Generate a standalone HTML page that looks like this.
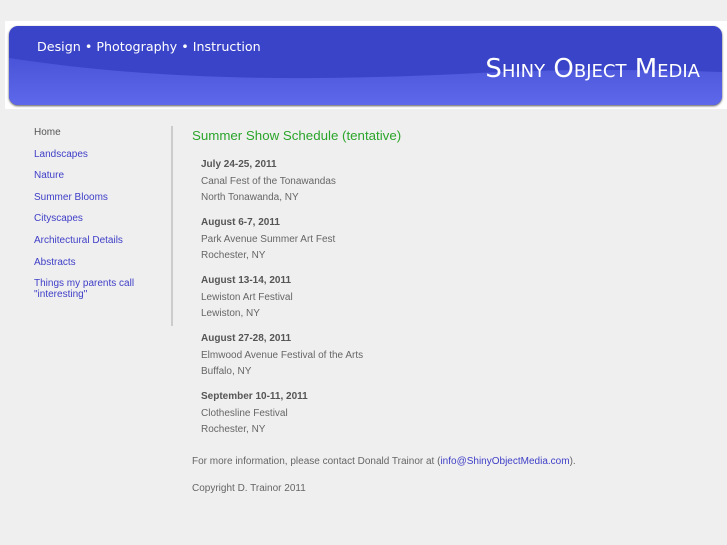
<!DOCTYPE html>
<html><head><style>
body{margin:0;background:#efefef;font-family:"Liberation Sans",sans-serif;width:727px;height:545px;overflow:hidden;position:relative}
.hdr{position:absolute;left:5px;top:21px;width:722px;height:88px;background:#fff}
.ban{position:absolute;left:9px;top:26px;width:713px;height:79px;border-radius:9px;overflow:hidden;background:#3a44c8;box-shadow:0 1px 2px #555}
.t1{position:absolute;left:28px;top:13px;color:#fff;font-size:12.7px;font-family:"DejaVu Sans",sans-serif}
.t2{position:absolute;right:22px;top:28px;color:#fff;font-size:26px;font-family:"DejaVu Sans",sans-serif;font-variant:small-caps}
.nav{position:absolute;left:34px;top:127px;font-size:10px}
.nav a{display:block;color:#3e3ec8;text-decoration:none;height:21.6px}
.vl{position:absolute;left:171px;top:126px;width:2px;height:200px;background:#ccc}
.main{position:absolute;left:192px;top:128px;font-size:10px;color:#666}
h1{font-size:13.3px;color:#2aa52a;font-weight:normal;margin:0 0 14px}
.ev{margin-left:9px;margin-bottom:8.5px;line-height:16.5px}
.ev b{color:#555}
p{margin:0}
</style></head><body>
<div class="hdr"></div>
<div class="ban">
<svg width="713" height="79" style="position:absolute;left:0;top:0">
<defs><linearGradient id="g" x1="0" y1="0" x2="0" y2="1"><stop offset="0" stop-color="#4a54d8"/><stop offset="1" stop-color="#5d68ea"/></linearGradient></defs>
<path d="M0 32 C150 55 300 55 450 48 C560 42 650 44 713 46 L713 79 L0 79Z" fill="url(#g)"/>
</svg>
<div class="t1">Design • Photography • Instruction</div>
<div class="t2">Shiny Object Media</div>
</div>
<div class="nav">
<a style="color:#555">Home</a><a>Landscapes</a><a>Nature</a><a>Summer Blooms</a><a>Cityscapes</a><a>Architectural Details</a><a>Abstracts</a><a>Things my parents call<br>"interesting"</a>
</div>
<div class="vl"></div>
<div class="main">
<h1>Summer Show Schedule (tentative)</h1>
<div class="ev"><b>July 24-25, 2011</b><br>Canal Fest of the Tonawandas<br>North Tonawanda, NY</div>
<div class="ev"><b>August 6-7, 2011</b><br>Park Avenue Summer Art Fest<br>Rochester, NY</div>
<div class="ev"><b>August 13-14, 2011</b><br>Lewiston Art Festival<br>Lewiston, NY</div>
<div class="ev"><b>August 27-28, 2011</b><br>Elmwood Avenue Festival of the Arts<br>Buffalo, NY</div>
<div class="ev"><b>September 10-11, 2011</b><br>Clothesline Festival<br>Rochester, NY</div>
<p style="margin-top:17px">For more information, please contact Donald Trainor at (<span style="color:#3e3ec8">info@ShinyObjectMedia.com</span>).</p>
<p style="margin-top:16px">Copyright D. Trainor 2011</p>
</div>
</body></html>
